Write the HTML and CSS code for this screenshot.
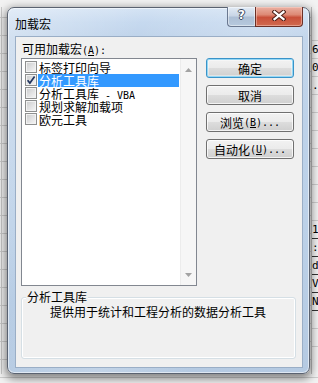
FILE: index.html
```html
<!DOCTYPE html>
<html lang="zh-CN">
<head>
<meta charset="utf-8">
<title>加载宏</title>
<link rel="stylesheet" href="styles.css">
</head>
<body>
<div class="desktop">
  <div class="gutter"></div>
  <div class="window">
    <div class="titlebar">
      <span class="title">加载宏</span>
      <div class="caption-buttons">
        <div class="cap help"><span class="help-glyph">?</span></div>
        <div class="cap close">
          <svg width="14" height="11" viewBox="0 0 14 11">
            <path d="M2.5 1.8 L11.5 9.2 M11.5 1.8 L2.5 9.2" stroke="#4a1f17" stroke-width="4.2" stroke-linecap="square" fill="none"/>
            <path d="M2.5 1.8 L11.5 9.2 M11.5 1.8 L2.5 9.2" stroke="#ffffff" stroke-width="2.2" stroke-linecap="square" fill="none"/>
          </svg>
        </div>
      </div>
    </div>
    <div class="client">
      <div class="main">
        <div class="left">
          <div class="label">可用加载宏<span class="m">(<u>A</u>):</span></div>
          <div class="listbox">
            <div class="items">
              <div class="item"><span class="cb"></span><span class="text">标签打印向导</span></div>
              <div class="item"><span class="cb">
                <svg width="10" height="10" viewBox="0 0 10 10"><path d="M1.6 5.2 L3.9 8 L8.6 1.6" stroke="#22355f" stroke-width="1.7" fill="none"/></svg>
              </span><span class="text selected">分析工具库</span></div>
              <div class="item"><span class="cb"></span><span class="text">分析工具库<span class="m"> - VBA</span></span></div>
              <div class="item"><span class="cb"></span><span class="text">规划求解加载项</span></div>
              <div class="item"><span class="cb"></span><span class="text">欧元工具</span></div>
            </div>
            <div class="scrollbar">
              <svg class="arrow" width="7" height="4" viewBox="0 0 7 4"><polygon points="3.5,0 7,4 0,4" fill="#a3a3a3"/></svg>
              <svg class="arrow" width="7" height="4" viewBox="0 0 7 4"><polygon points="0,0 7,0 3.5,4" fill="#a3a3a3"/></svg>
            </div>
          </div>
        </div>
        <div class="buttons">
          <div class="btn default">确定</div>
          <div class="btn">取消</div>
          <div class="btn">浏览<span class="m">(<u>B</u>)...</span></div>
          <div class="btn">自动化<span class="m">(<u>U</u>)...</span></div>
        </div>
      </div>
      <div class="group">
        <div class="group-label">分析工具库</div>
        <div class="group-text">提供用于统计和工程分析的数据分析工具</div>
      </div>
    </div>
  </div>
  <div class="strip">
    <div class="cell tall"></div>
    <div class="cell"><span class="ch">6</span></div>
    <div class="cell"><span class="ch">0</span></div>
    <div class="cell"><span class="ch">.</span></div>
    <div class="cell"></div>
    <div class="cell"></div>
    <div class="cell"></div>
    <div class="cell"></div>
    <div class="cell"></div>
    <div class="cell"></div>
    <div class="cell"></div>
    <div class="cell dark"><span class="ch">1</span></div>
    <div class="cell dark"><span class="ch">:</span></div>
    <div class="cell dark"><span class="ch">d</span></div>
    <div class="cell dark"><span class="ch">V</span></div>
    <div class="cell dark"><span class="ch">N</span></div>
    <div class="cell"></div>
    <div class="cell"></div>
  </div>
</div>
</body>
</html>
```

FILE: styles.css
```css
* {
  box-sizing: border-box;
}

html,
body {
  margin: 0;
  padding: 0;
}

body {
  width: 318px;
  height: 383px;
  overflow: hidden;
  background-color: #f2f2f2;
  background-image: repeating-linear-gradient(180deg, transparent 0 17px, #cdcdcd 17px 18px);
  font-family: "Noto Sans CJK SC", sans-serif;
  font-size: 12px;
  color: #000;
}

.desktop {
  display: flex;
  padding-top: 7px;
}

.gutter {
  flex: none;
  border-left: 1px solid #c8c8c8;
  margin-left: 1px;
  width: 6px;
}

.window {
  flex: none;
  width: 303px;
  height: 367px;
  border: 1px solid #5a6270;
  border-radius: 7px;
  background:
    linear-gradient(115deg, rgba(255, 255, 255, 0.35) 0%, rgba(255, 255, 255, 0) 30%, rgba(255, 255, 255, 0.18) 55%, rgba(255, 255, 255, 0) 75%),
    linear-gradient(180deg, #d4e3f4 0px, #c6d9ef 14px, #bfd3ea 30px, #bcd1e8 60%, #b5cae2 100%);
  box-shadow: inset 0 0 0 1px rgba(255, 255, 255, 0.55), 0 3px 9px 2px rgba(0, 0, 0, 0.45);
  padding: 0 6px 5px 7px;
  display: flex;
  flex-direction: column;
  position: relative;
  z-index: 1;
}

.titlebar {
  height: 28px;
  display: flex;
  align-items: flex-start;
  justify-content: space-between;
}

.title {
  padding-top: 8px;
  line-height: 16px;
  font-size: 12px;
  color: #000;
}

.caption-buttons {
  display: flex;
  margin-top: -1px;
}

.cap {
  height: 20px;
  display: flex;
  align-items: center;
  justify-content: center;
  border: 1px solid #6a7890;
  border-top: none;
}

.help {
  width: 28px;
  border-right: none;
  border-bottom-left-radius: 4px;
  background: linear-gradient(180deg, #e3ebf5 0%, #c9d6e6 45%, #adbfd5 55%, #b6c9de 100%);
  box-shadow: inset 0 0 0 1px rgba(255, 255, 255, 0.45);
}

.help-glyph {
  font-family: "DejaVu Sans", sans-serif;
  font-weight: bold;
  font-size: 12px;
  line-height: 12px;
  color: #fff;
  margin-top: -3px;
  text-shadow: 1px 0 0 #3b4a60, -1px 0 0 #3b4a60, 0 1px 0 #3b4a60, 0 -1px 0 #3b4a60;
}

.close {
  width: 48px;
  border-color: #6b2f26;
  border-bottom-right-radius: 4px;
  background: linear-gradient(180deg, #eab0a2 0%, #dd8a76 40%, #c9503a 55%, #d06a4f 100%);
  box-shadow: inset 0 0 0 1px rgba(255, 220, 210, 0.45);
}

.close svg {
  margin-top: -3px;
}

.client {
  height: 332px;
  border: 1px solid #9aaec6;
  background: #f0f0f0;
  display: flex;
  flex-direction: column;
}

.main {
  display: flex;
  padding: 0 8px 0 5px;
}

.left {
  width: 176px;
  display: flex;
  flex-direction: column;
}

.label {
  height: 21px;
  padding-top: 2px;
  padding-left: 1px;
  line-height: 19px;
}

.m {
  font-family: "DejaVu Sans Mono", monospace;
  font-size: 10px;
}

.listbox {
  height: 228px;
  border: 1px solid #828790;
  background: #fff;
  display: flex;
}

.items {
  flex: 1;
  padding-top: 2px;
  display: flex;
  flex-direction: column;
}

.item {
  height: 13px;
  display: flex;
  align-items: flex-start;
}

.cb {
  width: 12px;
  height: 12px;
  margin-left: 3px;
  border: 1px solid #8e8f8f;
  background: linear-gradient(135deg, #c9cacb 0%, #e3e3e4 55%, #f7f7f7 100%);
  box-shadow: inset 0 0 0 1px #f2f2f2;
  display: flex;
  align-items: center;
  justify-content: center;
  flex: none;
}

.text {
  flex: 1;
  margin-left: 1px;
  margin-right: 1px;
  padding-left: 1px;
  line-height: 13px;
  height: 13px;
  white-space: nowrap;
}

.text.selected {
  background: #3399ff;
  color: #fff;
}

.scrollbar {
  width: 16px;
  flex: none;
  background: #f6f6f6;
  border-left: 1px solid #ececec;
  display: flex;
  flex-direction: column;
  justify-content: space-between;
  align-items: center;
  padding: 9px 0 8px;
}

.arrow {
  display: block;
}

.buttons {
  width: 88px;
  margin-left: 9px;
  padding-top: 21px;
  display: flex;
  flex-direction: column;
  gap: 7px;
}

.btn {
  height: 20px;
  border: 1px solid #707070;
  border-radius: 3px;
  background: linear-gradient(180deg, #f2f2f2 0%, #ebebeb 49%, #dddddd 50%, #cfcfcf 100%);
  box-shadow: inset 0 0 0 1px rgba(255, 255, 255, 0.75);
  display: flex;
  align-items: center;
  justify-content: center;
  line-height: 16px;
  padding-top: 1px;
  white-space: nowrap;
}

.btn.default {
  border-color: #3a93c8;
  box-shadow: inset 0 0 0 1px #94d8f6, inset 0 0 0 2px rgba(255, 255, 255, 0.4);
}

.group {
  margin: 11px 6px 0 5px;
  height: 62px;
  border: 1px solid #d5dfe5;
  border-radius: 3px;
  box-shadow: inset 0 0 0 1px #ffffff;
  display: flex;
  flex-direction: column;
  align-items: flex-start;
}

.group-label {
  margin-top: -8px;
  margin-left: 4px;
  padding: 0 1px;
  background: #f0f0f0;
  line-height: 13px;
}

.group-text {
  margin-top: 2px;
  margin-left: 28px;
  line-height: 13px;
}

.strip {
  flex: 1;
  margin-left: 1px;
  border-left: 1px solid #bdbdbd;
  display: flex;
  flex-direction: column;
  background: #f4f4f4;
}

.cell {
  height: 18px;
  flex: none;
  border-bottom: 1px solid #cfcfcf;
  overflow: hidden;
  font-family: "DejaVu Sans Mono", monospace;
  font-size: 11px;
  line-height: 17px;
  padding-left: 0;
}

.cell.tall {
  height: 34px;
}

.cell.dark {
  border-bottom: 1px solid #333;
}
```
